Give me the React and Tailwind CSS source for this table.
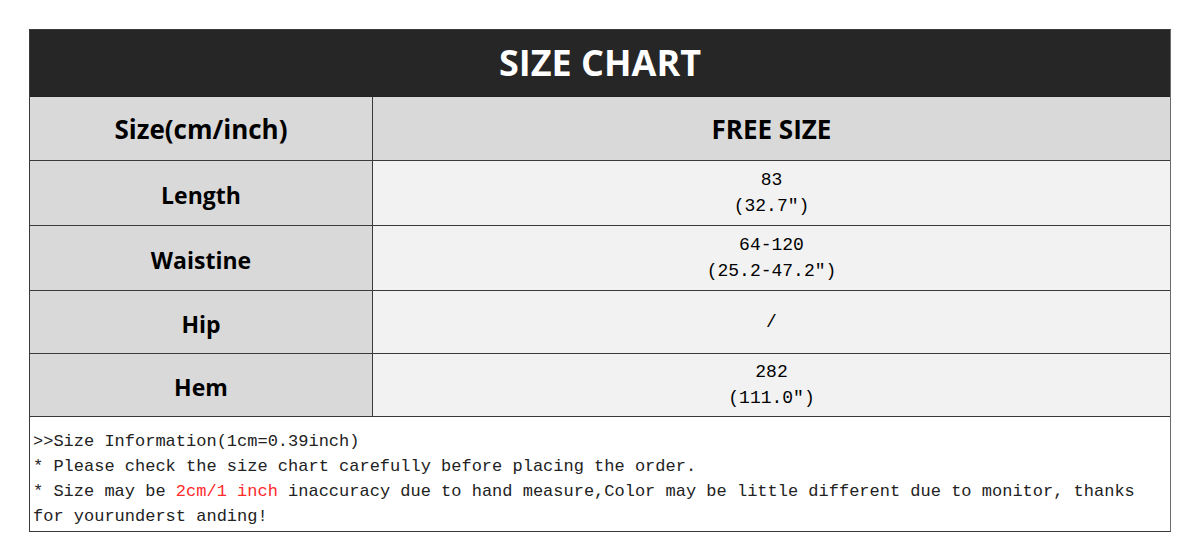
const rows = [
  { label: "Length", value: ["83", '(32.7")'], h: "h-[65px]" },
  { label: "Waistine", value: ["64-120", '(25.2-47.2")'], h: "h-[65px]" },
  { label: "Hip", value: ["/"], h: "h-[63px]" },
  { label: "Hem", value: ["282", '(111.0")'], h: "h-[63px]" },
];

const sans = { fontFamily: '"Open Sans", "Noto Sans", sans-serif' };
const mono = { fontFamily: '"Liberation Mono", "Noto Sans CJK SC", monospace' };

export default function App() {
  return (
    <div className="w-[1200px] h-[534px] bg-white pt-[29px] pl-[29px]">
      <div className="w-[1142px] border border-[#3a3a3a] border-r-[#6b6b6b]">
        <div
          className="h-[67px] bg-[#262626] text-white flex items-center justify-center text-[36px] font-bold border-b border-[#222]"
          style={sans}
        >
          SIZE CHART
        </div>
        <div className="flex h-[64px] bg-[#d9d9d9] border-b border-[#3a3a3a]" style={sans}>
          <div className="w-[343px] border-r border-[#3a3a3a] flex items-center justify-center pt-[2px] text-[26px] font-bold text-black">
            Size(cm/inch)
          </div>
          <div className="flex-1 flex items-center justify-center pt-[2px] text-[26px] font-bold text-black">
            FREE SIZE
          </div>
        </div>
        {rows.map((r) => (
          <div key={r.label} className={`flex ${r.h} border-b border-[#3a3a3a]`}>
            <div
              className="w-[343px] bg-[#d9d9d9] border-r border-[#3a3a3a] flex items-center justify-center pt-[5px] text-[23px] font-bold text-black"
              style={sans}
            >
              {r.label}
            </div>
            <div
              className="flex-1 bg-[#f2f2f2] flex flex-col items-center justify-center text-[18px] leading-[26px] text-black"
              style={mono}
            >
              {r.value.map((v) => (
                <div key={v}>{v}</div>
              ))}
            </div>
          </div>
        ))}
        <div className="h-[114px] px-[3px] pt-[12px] text-[17px] leading-[25px] text-[#222]" style={mono}>
          <div>&gt;&gt;Size Information(1cm=0.39inch)</div>
          <div>* Please check the size chart carefully before placing the order.</div>
          <div>
            * Size may be <span className="text-[#ff2a2a]">2cm/1 inch</span> inaccuracy due to hand
            measure,Color may be little different due to monitor, thanks for yourunderst anding!
          </div>
        </div>
      </div>
    </div>
  );
}
